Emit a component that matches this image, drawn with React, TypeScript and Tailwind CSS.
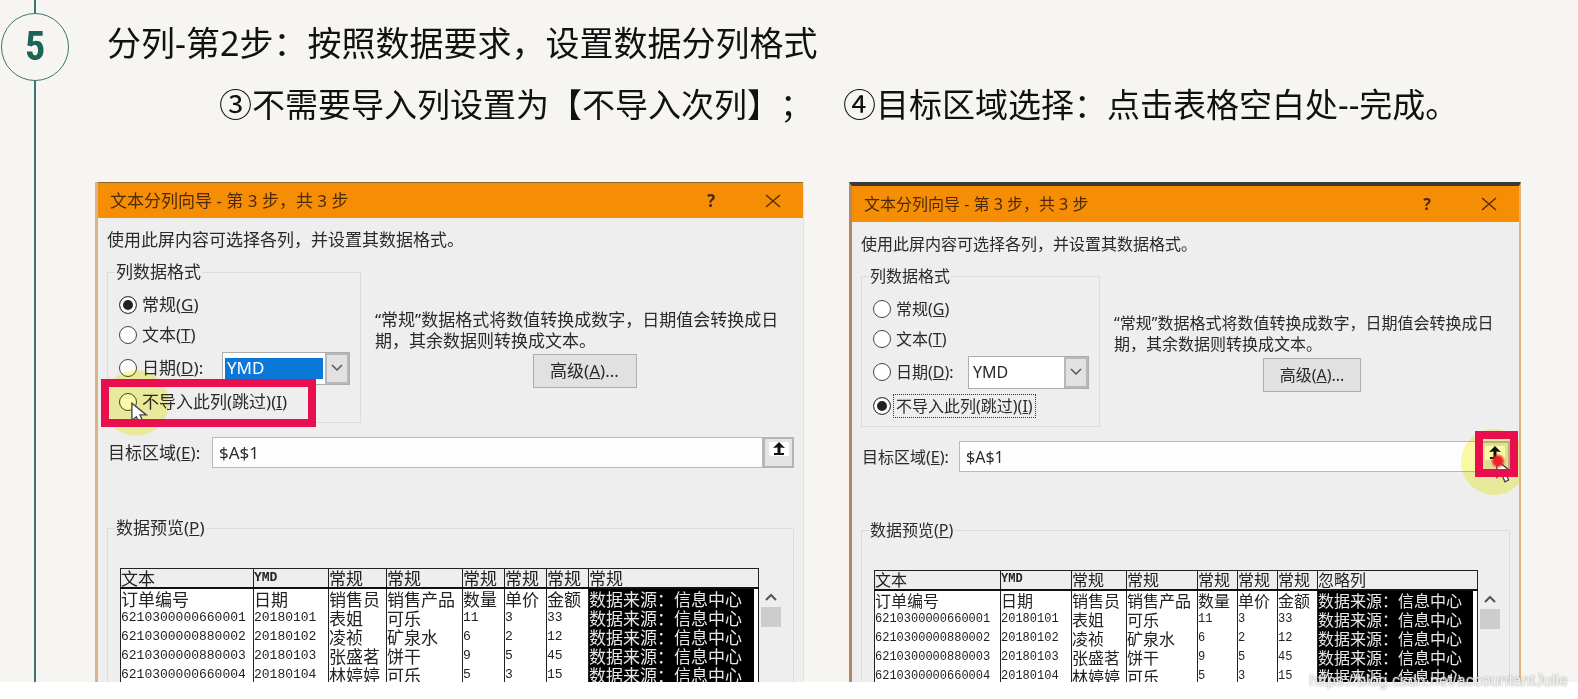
import React from 'react';

interface WizardStyle {
  frame: string;
  text: string;
  titleBar: string;
  formatBox: string;
  select: string;
  selectBox: string;
  advanced: string;
  targetLabel: string;
  previewGap: string;
  number: string;
}

interface WizardProps {
  id: string;
  styles: WizardStyle;
  columns: number[];
  types: string[];
  selected: string;
  skipMark?: React.ReactNode;
  targetMark?: React.ReactNode;
}

const rows = [
  ['订单编号', '日期', '销售员', '销售产品', '数量', '单价', '金额'],
  ['6210300000660001', '20180101', '表姐', '可乐', '11', '3', '33'],
  ['6210300000880002', '20180102', '凌祯', '矿泉水', '6', '2', '12'],
  ['6210300000880003', '20180103', '张盛茗', '饼干', '9', '5', '45'],
  ['6210300000660004', '20180104', '林婷婷', '可乐', '5', '3', '15'],
];

const formats = [
  { value: 'general', label: '常规', hotkey: 'G', tail: '', height: 'h-[30px]' },
  { value: 'text', label: '文本', hotkey: 'T', tail: '', height: 'h-[30px]' },
  { value: 'date', label: '日期', hotkey: 'D', tail: ':', height: 'h-9' },
  { value: 'skip', label: '不导入此列(跳过)', hotkey: 'I', tail: '', height: 'h-8' },
];

const leftStyles: WizardStyle = {
  frame: 'border-l-[3px] border-l-[#d9b48a] border-r border-r-[#f5e3b0]',
  text: 'text-[17px]',
  titleBar: 'border-t border-[#8f6a2c]',
  formatBox: 'w-[254px]',
  select: 'bg-[#0a78d7] text-white',
  selectBox: 'w-[128px]',
  advanced: 'w-[104px]',
  targetLabel: 'w-[105px]',
  previewGap: 'mt-[50px]',
  number: 'text-[13px]',
};

const rightStyles: WizardStyle = {
  frame: 'border-t-4 border-t-[#3c3a38] border-l-[3px] border-l-[#b08a60] border-r-2 border-r-[#dfb277]',
  text: 'text-base',
  titleBar: '',
  formatBox: 'w-[239px]',
  select: 'bg-white text-[#2a2a2a]',
  selectBox: 'w-[121px]',
  advanced: 'w-[98px]',
  targetLabel: 'w-[98px]',
  previewGap: 'mt-12',
  number: 'text-[12px]',
};

function Cursor({ className }: { className: string }) {
  return (
    <svg viewBox="0 0 20 26" className={className}>
      <path d="M1 1 L1 20 L6 16 L10 25 L14 23 L10 14 L17 14 Z" fill="#fff" stroke="#444" strokeWidth="1.5" />
    </svg>
  );
}

function Wizard({ id, styles, columns, types, selected, skipMark, targetMark }: WizardProps) {
  return (
    <div className={`flex flex-col min-w-0 overflow-hidden bg-[#eeeeee] text-[#2a2a2a] ${styles.frame} ${styles.text}`}>
      {/* Title bar */}
      <div className={`flex items-center h-9 shrink-0 pl-3 pr-[22px] bg-[#f58d05] text-[#4d2a08] ${styles.titleBar}`}>
        <span className="flex-1 whitespace-nowrap">文本分列向导 - 第 3 步，共 3 步</span>
        <button className="w-8 font-bold" aria-label="帮助">?</button>
        <button className="ml-[38px] flex justify-center w-4" aria-label="关闭">
          <svg viewBox="0 0 16 16" className="size-4" stroke="#5a2c05" strokeWidth="1.5">
            <path d="M1 2 L15 14 M15 2 L1 14" />
          </svg>
        </button>
      </div>

      <div className="px-[9px] pt-3 leading-5">
        <p className="whitespace-nowrap">使用此屏内容可选择各列，并设置其数据格式。</p>

        {/* Column format */}
        <div className="mt-3 flex">
          <fieldset className={`shrink-0 border border-[#dcdcdc] pl-[7px] pb-1 ${styles.formatBox}`}>
            <legend className="px-px">列数据格式</legend>
            <div className="pt-2 pl-1">
              {formats.map((f) => (
                <div key={f.value} className={`relative flex items-center ${f.height}`}>
                  <input
                    type="radio"
                    id={`${id}-${f.value}`}
                    name={`${id}-format`}
                    defaultChecked={selected === f.value}
                    className="appearance-none size-[18px] shrink-0 rounded-full border border-[#444] bg-white checked:bg-[#222] checked:shadow-[inset_0_0_0_3px_white]"
                  />
                  <label
                    htmlFor={`${id}-${f.value}`}
                    className={`ml-[3px] px-[2px] whitespace-nowrap ${
                      selected === 'skip' && f.value === 'skip' ? 'py-px outline-1 outline-dotted outline-[#333]' : ''
                    }`}
                  >
                    {f.label}(<u>{f.hotkey}</u>){f.tail}
                  </label>
                  {f.value === 'date' && (
                    <div className={`ml-auto mr-[10px] flex h-[33px] border border-[#adadad] bg-white ${styles.selectBox}`}>
                      <select
                        aria-label="日期格式"
                        className={`appearance-none flex-1 min-w-0 my-[5px] mx-[2px] pl-[2px] leading-5 ${styles.select}`}
                      >
                        <option>YMD</option>
                      </select>
                      <span className="flex items-center justify-center w-6 border-2 border-[#b8b8b8] bg-[#e1e1e1]">
                        <svg viewBox="0 0 12 8" className="w-3 h-2" fill="none" stroke="#555" strokeWidth="1.5">
                          <path d="M1 1 L6 6 L11 1" />
                        </svg>
                      </span>
                    </div>
                  )}
                  {f.value === 'skip' && skipMark}
                </div>
              ))}
            </div>
          </fieldset>

          <div className="flex-1 min-w-0 flex flex-col pt-[47px] pl-[14px]">
            <p className="leading-[21px] whitespace-nowrap">
              “常规”数据格式将数值转换成数字，日期值会转换成日
              <br />
              期，其余数据则转换成文本。
            </p>
            <button className={`mt-[3px] self-center h-[34px] border border-[#adadad] bg-[#e1e1e1] ${styles.advanced}`}>
              高级(<u>A</u>)...
            </button>
          </div>
        </div>

        {/* Target range */}
        <div className="mt-[14px] flex items-center h-[31px]">
          <label htmlFor={`${id}-target`} className={`shrink-0 pl-px whitespace-nowrap ${styles.targetLabel}`}>
            目标区域(<u>E</u>):
          </label>
          <input
            id={`${id}-target`}
            defaultValue="$A$1"
            className="flex-1 min-w-0 h-full px-[6px] border border-[#b9b9bd] bg-[#fdfdfd]"
          />
          <div className="relative h-full">
            <button
              aria-label="选择区域"
              className="flex items-start justify-center w-[31px] h-full pt-[3px] border-2 border-[#b5b5b9] bg-[#e4e4e4]"
            >
              <svg viewBox="0 0 14 14" className="w-5 h-[14px] bg-white" fill="#111">
                <path d="M7 0 L13 6 L8.500 5.500 L8.500 11 L12 11 L12 13 L2 13 L2 11 L5.500 11 L5.500 5.500 L1 6 Z" />
              </svg>
            </button>
            {targetMark}
          </div>
        </div>

        {/* Preview */}
        <fieldset className={`min-w-0 border border-b-0 border-[#dcdcdc] pl-[7px] ${styles.previewGap}`}>
          <legend className="px-px whitespace-nowrap">
            数据预览(<u>P</u>)
          </legend>
          <div className="pt-[30px] pl-[5px] flex">
            <table className='table-fixed border-collapse self-start bg-white text-[#222] border border-[#222] font-["Noto_Sans_CJK_SC",sans-serif]'>
              <colgroup>
                {columns.map((w, i) => (
                  <col key={i} style={{ width: w }} />
                ))}
              </colgroup>
              <thead>
                <tr className="h-[19px] bg-[#eeeeee] border-b-2 border-[#111]">
                  {types.map((t, i) => (
                    <th
                      key={i}
                      className={`p-0 text-left leading-[17px] whitespace-nowrap border-l border-[#222] ${
                        t === 'YMD' ? `font-bold font-["Liberation_Mono",monospace] ${styles.number}` : 'font-normal'
                      }`}
                    >
                      {t}
                    </th>
                  ))}
                </tr>
              </thead>
              <tbody>
                {rows.map((row, r) => (
                  <tr key={r} className="h-[19px]">
                    {row.map((cell, c) => (
                      <td
                        key={c}
                        className={`p-0 leading-[19px] whitespace-nowrap border-l border-[#222] ${
                          /^\d+$/.test(cell) ? `font-["Liberation_Mono",monospace] ${styles.number}` : ''
                        }`}
                      >
                        {cell}
                      </td>
                    ))}
                    <td className="p-0 pr-1 leading-[19px] whitespace-nowrap border-l border-[#222]">
                      <div className="h-[19px] bg-black text-[#e8e8e8]">数据来源：信息中心</div>
                    </td>
                  </tr>
                ))}
              </tbody>
            </table>
            <div className="ml-[2px] mt-[21px] w-5 flex flex-col items-center">
              <svg viewBox="0 0 12 8" className="mt-1 w-3 h-2" fill="none" stroke="#555" strokeWidth="2">
                <path d="M1 7 L6 2 L11 7" />
              </svg>
              <span className="mt-[6px] w-full h-5 bg-[#cdcdcd]" />
            </div>
          </div>
        </fieldset>
      </div>
    </div>
  );
}

export default function App() {
  return (
    <main className='relative min-h-screen bg-white font-["Noto_Sans","Noto_Sans_CJK_SC",sans-serif]'>
      <section className="flex bg-[#f6f5f1]">
        {/* Timeline */}
        <div className="w-[70px] shrink-0 flex flex-col items-center">
          <span className="w-[2px] h-[13px] bg-[#3c766d]" />
          <span className='flex items-center justify-center size-[68px] rounded-full border border-[#3c766d] text-[#1d6358] text-[40px] leading-none font-bold font-["Roboto_Condensed","Open_Sans_Condensed","DejaVu_Sans_Condensed",sans-serif]'>
            5
          </span>
          <span className="w-[2px] flex-1 bg-[#3c766d]" />
        </div>

        <div className="flex-1 min-w-0">
          <header className="h-[182px] pl-[37px] pt-[13px] text-[#111] whitespace-nowrap [text-spacing-trim:space-all]">
            <h1 className="text-[34px] leading-[61px]">分列-第2步：按照数据要求，设置数据分列格式</h1>
            <p className="pl-[112px] flex gap-[30px] text-[33px] leading-[61px]">
              <span>③不需要导入列设置为【不导入次列】；</span>
              <span>④目标区域选择：点击表格空白处--完成。</span>
            </p>
          </header>

          <div className="grid grid-cols-[709fr_672fr] gap-[45px] h-[500px] pl-[25px] pr-[57px] overflow-hidden">
            <Wizard
              id="before"
              styles={leftStyles}
              columns={[133, 75, 58, 76, 42, 42, 42, 170]}
              types={['文本', 'YMD', '常规', '常规', '常规', '常规', '常规', '常规']}
              selected="general"
              skipMark={
                <>
                  <span className="absolute -left-4 -top-4 size-[66px] rounded-full bg-[#fafaa6] mix-blend-multiply" />
                  <Cursor className="absolute left-3 top-4 w-[18px] h-6" />
                  <span className="absolute -left-[18px] -top-[7px] w-[215px] h-12 border-8 border-[#e90f4f]" />
                </>
              }
            />
            <Wizard
              id="after"
              styles={rightStyles}
              columns={[126, 71, 55, 71, 40, 40, 40, 160]}
              types={['文本', 'YMD', '常规', '常规', '常规', '常规', '常规', '忽略列']}
              selected="skip"
              targetMark={
                <>
                  <span className="absolute -right-[17px] -top-3 size-[66px] rounded-full bg-[#fafaa6] mix-blend-multiply" />
                  <Cursor className="absolute -right-1 top-[18px] w-[18px] h-6" />
                  <span className="absolute -right-2 -top-[10px] w-[43px] h-[46px] border-8 border-[#e90f4f]" />
                  <span className="absolute right-[6px] top-[14px] size-3 rounded-full bg-[#ee2222] blur-[1px]" />
                </>
              }
            />
          </div>
        </div>
      </section>

      {/* Watermark */}
      <a
        href="https://blog.csdn.net/accountantJulie"
        className='absolute right-[10px] bottom-2 text-base leading-5 text-white/80 font-["Liberation_Sans",sans-serif] [text-shadow:0_0_2px_#888]'
      >
        https://blog.csdn.net/accountantJulie
      </a>
    </main>
  );
}
